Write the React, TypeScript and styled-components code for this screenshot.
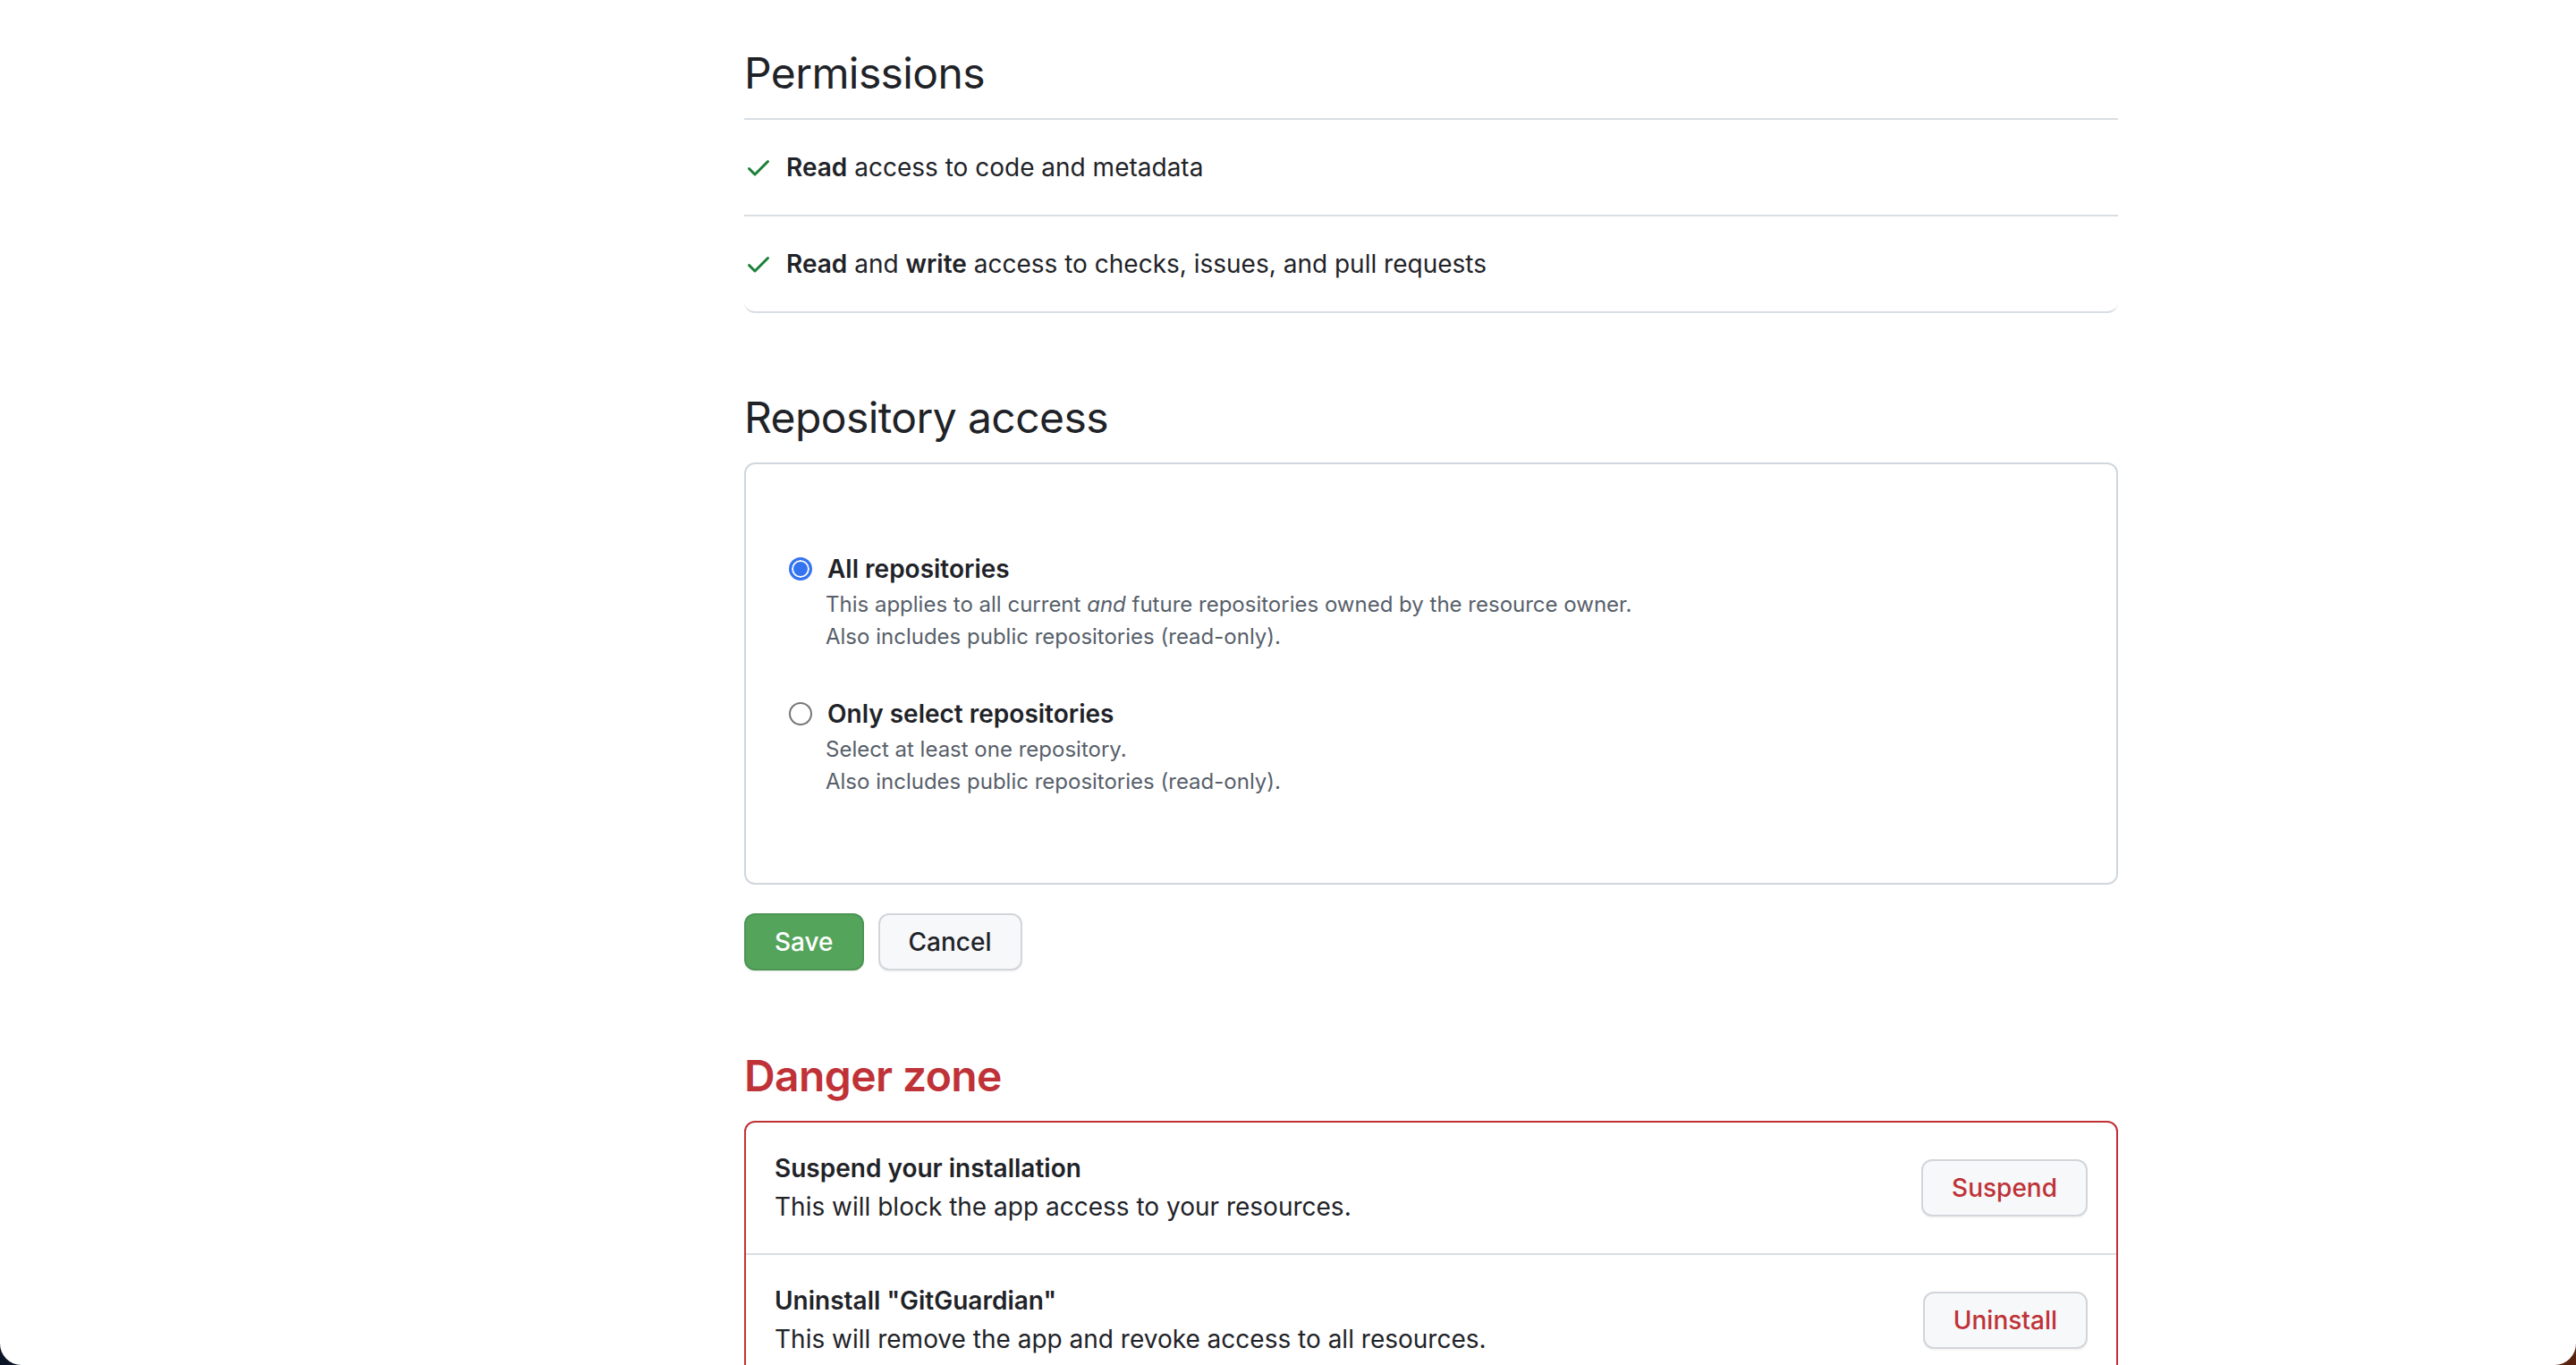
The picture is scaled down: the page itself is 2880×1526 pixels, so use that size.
import styled, { createGlobalStyle } from "styled-components";

const GlobalStyle = createGlobalStyle`
  html, body {
    margin: 0;
    padding: 0;
    background: #fff;
  }
  * {
    box-sizing: border-box;
  }
`;

const Desktop = styled.div`
  width: 2880px;
  height: 1526px;
  overflow: hidden;
  background: linear-gradient(90deg, #0c1526 50%, #5a2310 50%);
`;

const Sheet = styled.main`
  width: 100%;
  height: 100%;
  overflow: hidden;
  background: #fff;
  border-radius: 0 0 24px 24px;
  padding-left: 832px;
  font-family: Inter, "Liberation Sans", sans-serif;
  color: #1f2328;
`;

const Content = styled.div`
  width: 1536px;
  display: flex;
  flex-direction: column;
`;

const Heading = styled.h2<{ $top: number; $danger?: boolean }>`
  margin: ${(props) => props.$top}px 0 20px;
  font-size: 48px;
  line-height: 60px;
  letter-spacing: -0.6px;
  font-weight: ${(props) => (props.$danger ? 600 : 400)};
  color: ${(props) => (props.$danger ? "#bf3237" : "#1f2328")};
`;

const PermissionList = styled.ul`
  margin: 0;
  padding: 0;
  list-style: none;
  border-top: 2px solid #d8dee4;
  border-radius: 0 0 12px 12px;
`;

const PermissionRow = styled.li`
  height: 108px;
  display: flex;
  align-items: center;
  gap: 15px;
  font-size: 28px;
  border-bottom: 2px solid #d8dee4;
  &:last-child {
    border-radius: 0 0 12px 12px;
  }
  b {
    font-weight: 600;
  }
`;

const CheckIcon = styled.svg`
  width: 32px;
  height: 32px;
  fill: #1a7f37;
  flex-shrink: 0;
`;

const AccessBox = styled.form`
  height: 472px;
  padding: 97px 48px 0;
  border: 2px solid #d0d7de;
  border-radius: 12px;
  display: flex;
  flex-direction: column;
  gap: 48px;
`;

const RadioLabel = styled.label`
  display: flex;
  align-items: center;
  gap: 17px;
  height: 40px;
  font-size: 28px;
  font-weight: 600;
`;

const Radio = styled.input`
  appearance: none;
  width: 26px;
  height: 26px;
  margin: 0;
  border-radius: 50%;
  border: 2px solid #767676;
  background: #fff;
  &:checked {
    border: 3px solid #3574f0;
    box-shadow: inset 0 0 0 2px #fff;
    background: #3574f0;
  }
`;

const RadioNote = styled.p`
  margin: 2px 0 0;
  padding-left: 41px;
  font-size: 24px;
  line-height: 36px;
  color: #57606a;
`;

const FormActions = styled.div`
  display: flex;
  gap: 16px;
  margin-top: 32px;
`;

const Button = styled.button<{ $primary?: boolean; $danger?: boolean }>`
  height: 64px;
  padding: 0 32px;
  border-radius: 12px;
  font-family: inherit;
  font-size: 28px;
  font-weight: 500;
  border: 2px solid ${(props) => (props.$primary ? "#4c9553" : "#d2d5d9")};
  background: ${(props) => (props.$primary ? "#54a45b" : "#f6f8fa")};
  color: ${(props) =>
    props.$primary ? "#fff" : props.$danger ? "#bf3237" : "#1f2328"};
  box-shadow: 0 2px 0 rgba(31, 35, 40, 0.04);
`;

const DangerButton = styled(Button)`
  min-width: 182px;
  flex-shrink: 0;
`;

const DangerBox = styled.section`
  border: 2px solid #bf3237;
  border-radius: 12px;
`;

const DangerRow = styled.div`
  height: 148px;
  padding: 0 32px;
  display: flex;
  align-items: center;
  justify-content: space-between;
  border-bottom: 2px solid #d8dee4;
`;

const DangerTitle = styled.div`
  font-size: 28px;
  line-height: 42px;
  font-weight: 600;
`;

const DangerText = styled.div`
  font-size: 28px;
  line-height: 44px;
`;

const checkPath =
  "M13.78 4.22a.75.75 0 0 1 0 1.06l-7.25 7.25a.75.75 0 0 1-1.06 0L2.22 9.28a.751.751 0 0 1 .018-1.042.751.751 0 0 1 1.042-.018L6 10.94l6.72-6.72a.75.75 0 0 1 1.06 0Z";

function Check() {
  return (
    <CheckIcon viewBox="0 0 16 16">
      <path d={checkPath} />
    </CheckIcon>
  );
}

function App() {
  return (
    <Desktop>
      <GlobalStyle />
      <Sheet>
        <Content>
          <Heading $top={52}>Permissions</Heading>
          <PermissionList>
            <PermissionRow>
              <Check />
              <span>
                <b>Read</b> access to code and metadata
              </span>
            </PermissionRow>
            <PermissionRow>
              <Check />
              <span>
                <b>Read</b> and <b>write</b> access to checks, issues, and pull
                requests
              </span>
            </PermissionRow>
          </PermissionList>

          <Heading $top={87}>Repository access</Heading>
          <AccessBox>
            <div>
              <RadioLabel>
                <Radio type="radio" name="access" defaultChecked />
                All repositories
              </RadioLabel>
              <RadioNote>
                This applies to all current <i>and</i> future repositories owned
                by the resource owner.
                <br />
                Also includes public repositories (read-only).
              </RadioNote>
            </div>
            <div>
              <RadioLabel>
                <Radio type="radio" name="access" />
                Only select repositories
              </RadioLabel>
              <RadioNote>
                Select at least one repository.
                <br />
                Also includes public repositories (read-only).
              </RadioNote>
            </div>
          </AccessBox>
          <FormActions>
            <Button $primary>Save</Button>
            <Button>Cancel</Button>
          </FormActions>

          <Heading $top={88} $danger>
            Danger zone
          </Heading>
          <DangerBox>
            <DangerRow>
              <div>
                <DangerTitle>Suspend your installation</DangerTitle>
                <DangerText>This will block the app access to your resources.</DangerText>
              </div>
              <DangerButton $danger>Suspend</DangerButton>
            </DangerRow>
            <DangerRow>
              <div>
                <DangerTitle>Uninstall "GitGuardian"</DangerTitle>
                <DangerText>This will remove the app and revoke access to all resources.</DangerText>
              </div>
              <DangerButton $danger>Uninstall</DangerButton>
            </DangerRow>
          </DangerBox>
        </Content>
      </Sheet>
    </Desktop>
  );
}

export default App;
